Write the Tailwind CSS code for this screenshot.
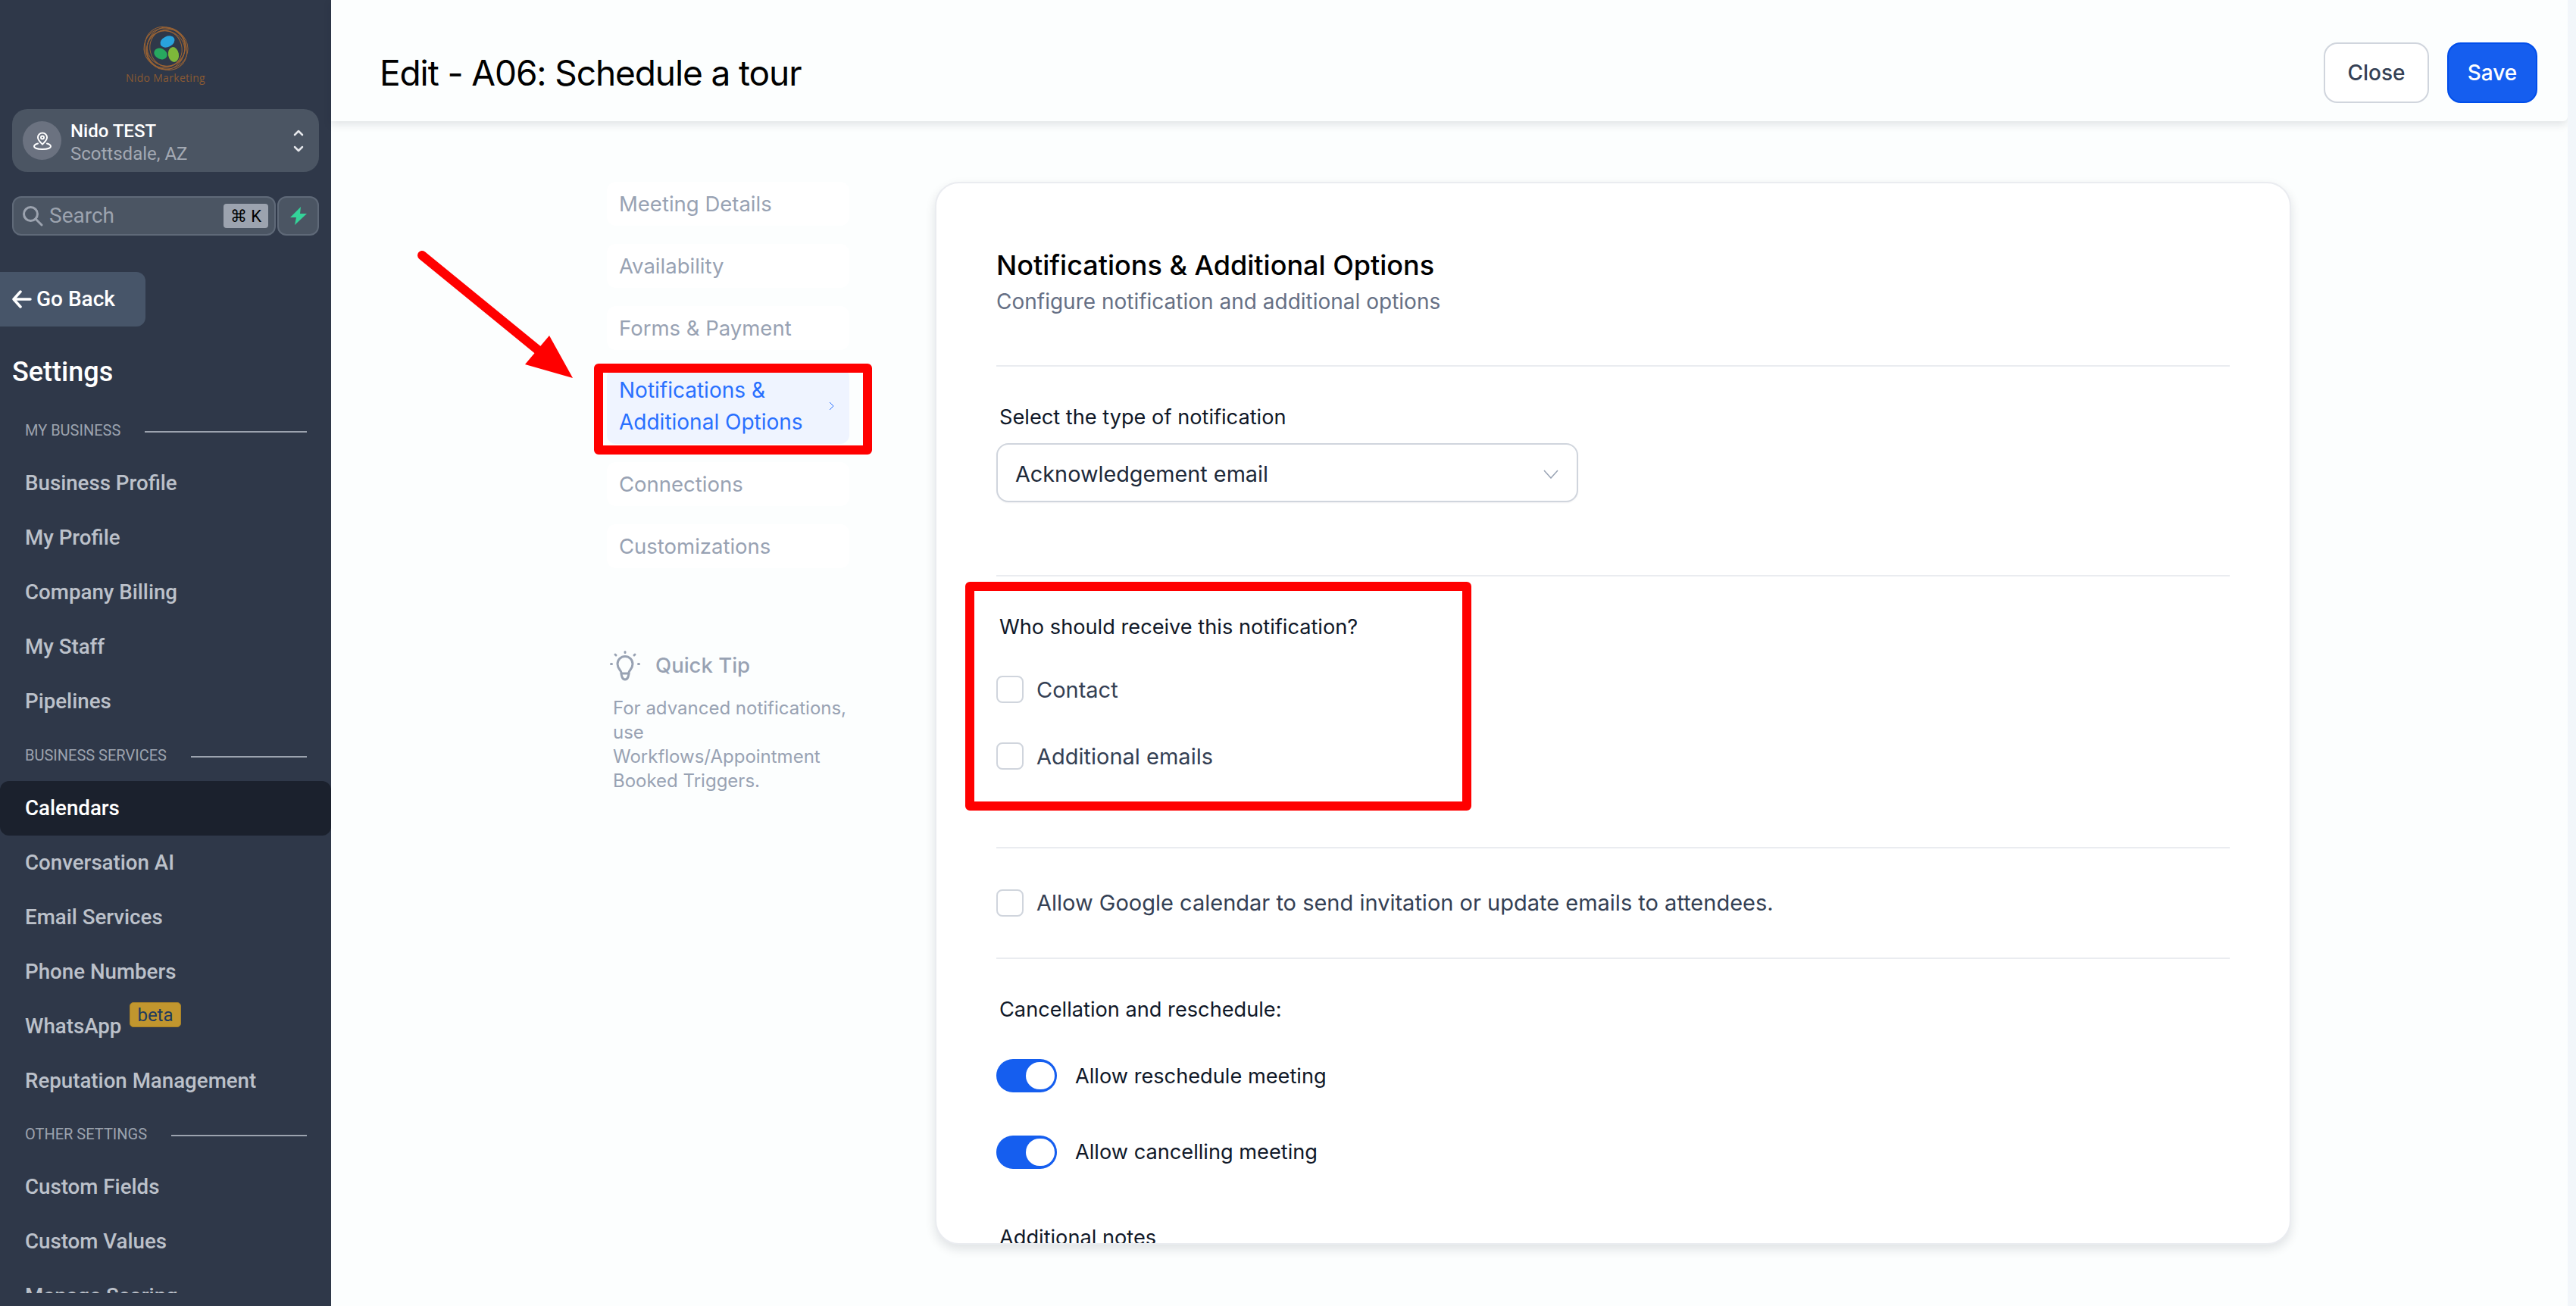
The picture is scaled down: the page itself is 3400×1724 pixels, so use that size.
<!DOCTYPE html>
<html lang="en">
<head>
    <meta charset="UTF-8">
    <title>Edit - A06: Schedule a tour</title>
    <script src="https://cdn.jsdelivr.net/npm/@tailwindcss/browser@4"></script>
</head>
<body class="bg-[#fcfefe]">
<div class="relative flex w-[3400px] h-[1724px] overflow-hidden font-['Inter',sans-serif]">

    <!-- sidebar -->
    <aside class="w-[437px] h-full shrink-0 flex flex-col bg-[#2f3849] font-['Roboto',sans-serif]">
        <div class="h-[144px] flex flex-col items-center pt-[33px]">
            <svg class="w-[64px] h-[62px]" viewBox="0 0 64 62" fill="none">
                <g stroke="#9a6334" stroke-width="1">
                    <ellipse cx="32" cy="31" rx="29" ry="27" transform="rotate(10 32 31)"/>
                    <ellipse cx="32" cy="31" rx="30" ry="26" transform="rotate(50 32 31)"/>
                    <ellipse cx="32" cy="31" rx="28" ry="25" transform="rotate(100 32 31)"/>
                    <ellipse cx="32" cy="31" rx="27" ry="24" transform="rotate(140 32 31)"/>
                    <ellipse cx="32" cy="31" rx="25" ry="23" transform="rotate(20 32 31)"/>
                    <ellipse cx="32" cy="31" rx="24" ry="21" transform="rotate(75 32 31)"/>
                </g>
                <ellipse cx="34" cy="22" rx="10" ry="7" fill="#29a3dc" transform="rotate(-25 34 22)"/>
                <ellipse cx="25" cy="38" rx="9" ry="7" fill="#27a85f" transform="rotate(25 25 38)"/>
                <ellipse cx="42" cy="39" rx="7" ry="10" fill="#7db83a" transform="rotate(-10 42 39)"/>
            </svg>
            <span class="text-[14px] leading-[16px] font-medium tracking-[0.3px] text-[#8a5a33] font-['Open_Sans',sans-serif]">Nido Marketing</span>
        </div>

        <div class="mx-4 h-[83px] flex items-center rounded-[20px] bg-[#4b5563] pl-[14px] pr-[20px]">
            <div class="w-[51px] h-[51px] rounded-full bg-[#6b7280] flex items-center justify-center">
                <svg class="w-[26px] h-[26px]" viewBox="0 0 26 26" fill="none" stroke="#fff" stroke-width="2" stroke-linecap="round" stroke-linejoin="round">
                    <path d="M13 17.5c-3-3-6-5.400-6-9a6 6 0 0 1 12 0c0 3.600-3 6-6 9z"/>
                    <circle cx="13" cy="8.500" r="2"/>
                    <path d="M7 16.500c-3 .8-5 2-5 3.700C2 22.500 7 24 13 24s11-1.500 11-3.800c0-1.700-2-2.900-5-3.700"/>
                </svg>
            </div>
            <div class="ml-3 mt-[5px] flex-1">
                <div class="text-[24px] leading-[30px] font-medium text-white">Nido TEST</div>
                <div class="text-[24px] leading-[30px] text-[#a3a9b3]">Scottsdale, AZ</div>
            </div>
            <svg class="w-[14px] h-[32px]" viewBox="0 0 14 32" fill="none" stroke="#e5e7eb" stroke-width="2.500" stroke-linecap="round" stroke-linejoin="round">
                <path d="M2 8l5-5 5 5"/><path d="M2 24l5 5 5-5"/>
            </svg>
        </div>

        <div class="mx-4 mt-[32px] flex h-[52px] gap-[2px]">
            <div class="flex-1 flex items-center rounded-[12px] border-2 border-[#5f6978] bg-[#4b5563] pl-[11px] pr-[8px]">
                <svg class="w-[28px] h-[28px]" viewBox="0 0 28 28" fill="none" stroke="#9ca3af" stroke-width="3" stroke-linecap="round">
                    <circle cx="11.500" cy="11.500" r="9"/><path d="M18 18l8 8"/>
                </svg>
                <span class="ml-[8px] flex-1 text-[28px] text-[#9ca3af]">Search</span>
                <span class="w-[59px] h-[32px] rounded-[4px] bg-[#9ca3af] flex items-center justify-center text-[22px] text-black">⌘ K</span>
            </div>
            <div class="w-[55px] flex items-center justify-center rounded-[12px] border-2 border-[#5f6978] bg-[#4b5563]">
                <svg class="w-[22px] h-[24px]" viewBox="0 0 22 24" fill="#34d399"><path d="M14 0L0 14h8l-2 10L22 9h-9z"/></svg>
            </div>
        </div>

        <div class="mt-[48px] w-[192px] h-[72px] flex items-center rounded-r-[12px] bg-[#475569] pl-4 text-[28px] font-medium text-white">
            <svg class="w-[26px] h-[26px] mr-[6px]" viewBox="0 0 26 26" fill="none" stroke="#fff" stroke-width="3.500" stroke-linecap="round" stroke-linejoin="round">
                <path d="M11 3L2 13l9 10"/><path d="M3 13h21"/>
            </svg>
            Go Back
        </div>

        <div class="mt-[37px] ml-4 h-[46px] leading-[46px] text-[36px] font-medium text-white">Settings</div>

        <!-- settings list, cut off by the window -->
        <nav class="mt-[20px] h-[1173px] overflow-hidden text-[27.7px] font-medium text-[#bcc1ca]">
            <div class="h-[68px] flex items-center pl-[33px] pr-[32px]"><span class="text-[20px] font-normal text-[#9ca3af]">MY BUSINESS</span><span class="flex-1 h-[2px] ml-[32px] mt-1 bg-[#9ca3af]"></span></div>
            <div class="h-[72px] flex items-center pl-[33px]">Business Profile</div>
            <div class="h-[72px] flex items-center pl-[33px]">My Profile</div>
            <div class="h-[72px] flex items-center pl-[33px]">Company Billing</div>
            <div class="h-[72px] flex items-center pl-[33px]">My Staff</div>
            <div class="h-[72px] flex items-center pl-[33px]">Pipelines</div>
            <div class="h-[69px] flex items-center pl-[33px] pr-[32px]"><span class="text-[20px] font-normal text-[#9ca3af]">BUSINESS SERVICES</span><span class="flex-1 h-[2px] ml-[32px] mt-1 bg-[#9ca3af]"></span></div>
            <div class="h-[72px] flex items-center pl-[33px] rounded-[12px] bg-[#1b212d] text-white">Calendars</div>
            <div class="h-[72px] flex items-center pl-[33px]">Conversation AI</div>
            <div class="h-[72px] flex items-center pl-[33px]">Email Services</div>
            <div class="h-[72px] flex items-center pl-[33px]">Phone Numbers</div>
            <div class="h-[72px] flex items-center pl-[33px]">
                WhatsApp
                <span class="ml-[11px] mb-[31px] h-[33px] px-[9px] flex items-center rounded-[5px] border border-[#a98227] bg-[#c1962e] text-[24px] font-normal text-[#1e3a5f]">beta</span>
            </div>
            <div class="h-[72px] flex items-center pl-[33px]">Reputation Management</div>
            <div class="h-[68px] flex items-center pl-[33px] pr-[32px]"><span class="text-[20px] font-normal text-[#9ca3af]">OTHER SETTINGS</span><span class="flex-1 h-[2px] ml-[32px] mt-1 bg-[#9ca3af]"></span></div>
            <div class="h-[72px] flex items-center pl-[33px]">Custom Fields</div>
            <div class="h-[72px] flex items-center pl-[33px]">Custom Values</div>
            <div class="h-[72px] flex items-center pl-[33px]">Manage Scoring</div>
        </nav>
    </aside>

    <!-- main -->
    <main class="flex-1 flex flex-col min-w-0">
        <header class="h-[160px] shrink-0 flex items-center justify-between pt-[32px] pl-[64px] pr-[40px] rounded-br-[6px] bg-[#fcfefe] shadow-[0_4px_12px_rgba(16,24,40,0.12)]">
            <h1 class="text-[46px] font-normal tracking-[-1.1px] text-black">Edit - A06: Schedule a tour</h1>
            <div class="flex gap-[24px]">
                <button class="w-[139px] h-[80px] rounded-[18px] border-2 border-[#d0d5dd] bg-white text-[28px] font-medium text-[#344054]">Close</button>
                <button class="w-[119px] h-[80px] rounded-[18px] border-2 border-[#004eeb] bg-[#155eef] text-[28px] font-medium text-white">Save</button>
            </div>
        </header>

        <div class="flex pt-[80px] pl-[364px]">
            <div class="w-[320px] shrink-0">
                <ul class="flex flex-col gap-[24px] text-[27.5px] text-[#98a2b3]">
                    <li class="h-[58px] flex items-center pt-[2px] pl-4 rounded-[12px] bg-white">Meeting Details</li>
                    <li class="h-[58px] flex items-center pt-[2px] pl-4 rounded-[12px] bg-white">Availability</li>
                    <li class="h-[58px] flex items-center pt-[2px] pl-4 rounded-[12px] bg-white">Forms &amp; Payment</li>
                    <li class="h-[100px] flex items-center justify-between pl-4 pr-[20px] rounded-[12px] bg-[#eff4ff] text-[28px] leading-[42px] text-[#2970ff]">
                        <span>Notifications &amp;<br>Additional Options</span>
                        <svg class="w-[7px] h-[12px]" viewBox="0 0 7 12" fill="none" stroke="#2970ff" stroke-width="1"><path d="M1 1l5 5-5 5"/></svg>
                    </li>
                    <li class="h-[58px] flex items-center pt-[2px] pl-4 rounded-[12px] bg-white">Connections</li>
                    <li class="h-[58px] flex items-center pt-[2px] pl-4 rounded-[12px] bg-white">Customizations</li>
                </ul>

                <div class="mt-[109px] flex items-center pl-[4px] h-[40px]">
                    <svg class="w-[40px] h-[40px]" viewBox="0 0 40 40" fill="none" stroke="#98a2b3" stroke-width="3" stroke-linecap="round" stroke-linejoin="round">
                        <path d="M15 29c0-3-5-5-5-11.500a10 10 0 0 1 20 0C30 24 25 26 25 29c0 3-1 9-5 9s-5-6-5-9z"/>
                        <path d="M15 30h10"/>
                        <path d="M20 1.500v1M7 5l1 1M33 5l-1 1M1.500 17.500h1M37.500 17.500h1"/>
                    </svg>
                    <span class="ml-[20px] text-[27.5px] font-medium text-[#98a2b3]">Quick Tip</span>
                </div>
                <p class="mt-[20px] pl-[8px] w-[320px] text-[24px] leading-[32px] text-[#98a2b3]">For advanced notifications, use<br>Workflows/Appointment<br>Booked Triggers.</p>
            </div>

            <!-- form card -->
            <section class="ml-[113px] w-[1790px] h-[1403px] shrink-0 overflow-hidden rounded-[32px] border-2 border-[#eaecf0] bg-white pt-[88px] pl-[79px] pr-[79px] shadow-[0_6px_14px_rgba(16,24,40,0.12)]">
                <h2 class="text-[36px] leading-[40px] font-medium text-black">Notifications &amp; Additional Options</h2>
                <p class="mt-[10px] text-[28px] leading-[36px] text-[#667085]">Configure notification and additional options</p>
                <hr class="mt-[66px] border-t-2 border-[#eaecf0]">

                <div class="mt-[49px] pl-[4px] text-[27.2px] leading-[36px] text-[#101828]">Select the type of notification</div>
                <div class="mt-[16px] w-[768px] h-[78px] flex items-center justify-between pt-[3px] pl-[23px] pr-[24px] rounded-[16px] border-2 border-[#d0d5dd] bg-white shadow-[0_1px_2px_rgba(16,24,40,0.05)] text-[28.8px] text-[#1d2939]">
                    Acknowledgement email
                    <svg class="w-[20px] h-[12px]" viewBox="0 0 20 12" fill="none" stroke="#98a2b3" stroke-width="1.500"><path d="M1 1l9 10 9-10"/></svg>
                </div>
                <hr class="mt-[96px] border-t-2 border-[#eaecf0]">

                <div class="mt-[49px] pl-[4px] text-[27.2px] leading-[36px] text-[#101828]">Who should receive this notification?</div>
                <div class="mt-[46px] flex items-center h-[36px] text-[29px] text-[#344054]">
                    <span class="w-[36px] h-[36px] rounded-[8px] border-2 border-[#d0d5dd] bg-white"></span>
                    <span class="ml-[17px] pt-[2px]">Contact</span>
                </div>
                <div class="mt-[52px] flex items-center h-[36px] text-[29px] text-[#344054]">
                    <span class="w-[36px] h-[36px] rounded-[8px] border-2 border-[#d0d5dd] bg-white"></span>
                    <span class="ml-[17px] pt-[2px]">Additional emails</span>
                </div>
                <hr class="mt-[102px] border-t-2 border-[#eaecf0]">

                <div class="mt-[54px] flex items-center h-[36px] text-[29px] text-[#344054]">
                    <span class="w-[36px] h-[36px] rounded-[8px] border-2 border-[#d0d5dd] bg-white"></span>
                    <span class="ml-[17px]">Allow Google calendar to send invitation or update emails to attendees.</span>
                </div>
                <hr class="mt-[54px] border-t-2 border-[#eaecf0]">

                <div class="mt-[49px] pl-[4px] text-[27.2px] leading-[36px] text-[#101828]">Cancellation and reschedule:</div>
                <div class="mt-[47px] flex items-center h-[44px] text-[27.2px] text-[#101828]">
                    <span class="w-[80px] h-[44px] flex justify-end py-[4px] pr-[3px] rounded-full bg-[#155eef]"><span class="w-[38px] h-[36px] rounded-full bg-white"></span></span>
                    <span class="ml-[24px] pt-[2px]">Allow reschedule meeting</span>
                </div>
                <div class="mt-[57px] flex items-center h-[44px] text-[27.2px] text-[#101828]">
                    <span class="w-[80px] h-[44px] flex justify-end py-[4px] pr-[3px] rounded-full bg-[#155eef]"><span class="w-[38px] h-[36px] rounded-full bg-white"></span></span>
                    <span class="ml-[24px]">Allow cancelling meeting</span>
                </div>
                <div class="mt-[73px] pl-[4px] text-[27.2px] leading-[36px] text-[#101828]">Additional notes</div>
            </section>
        </div>
    </main>

    <div class="w-[11px] shrink-0 bg-[#f2f6fa]"></div>

    <!-- red annotations on top of the screenshot -->
    <div class="absolute left-[784px] top-[480px] w-[367px] h-[120px] rounded-[6px] border-[12px] border-[#ff0000]"></div>
    <div class="absolute left-[1274px] top-[768px] w-[668px] h-[302px] rounded-[6px] border-[12px] border-[#ff0000]"></div>
    <svg class="absolute left-[540px] top-[320px] w-[230px] h-[190px]" viewBox="0 0 230 190" fill="none">
        <path d="M17 17L170 142" stroke="#ff0000" stroke-width="12" stroke-linecap="round"/>
        <path d="M216 179L153 161L185 123z" fill="#ff0000"/>
    </svg>
</div>
</body>
</html>
